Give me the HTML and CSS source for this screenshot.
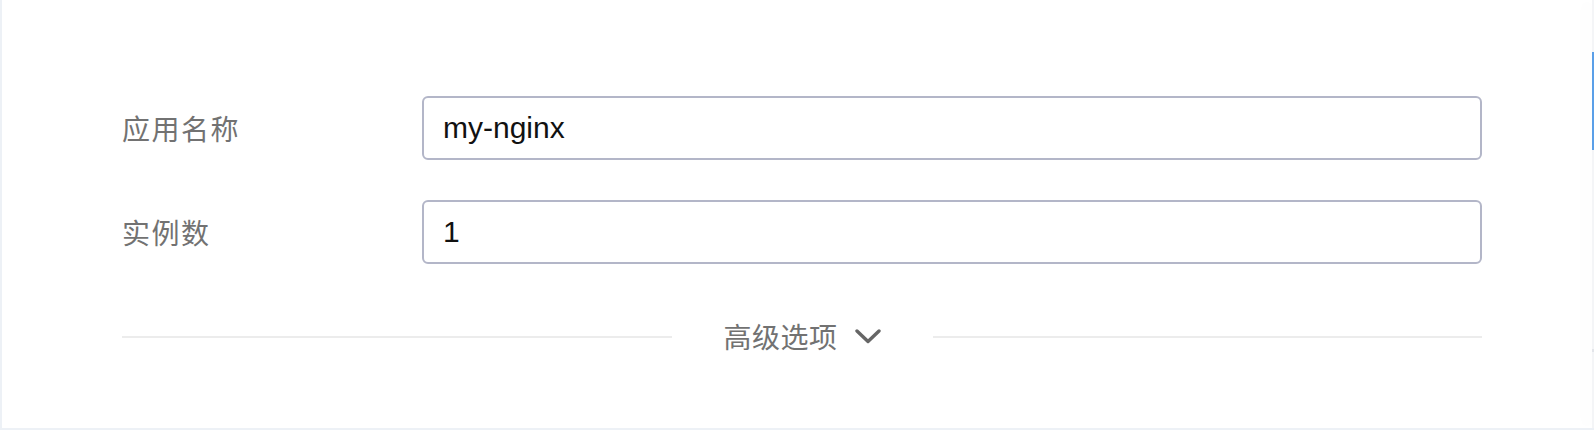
FILE: index.html
```html
<!DOCTYPE html>
<html lang="zh-CN">
<head>
<meta charset="utf-8">
<title>应用设置</title>
<link rel="stylesheet" href="styles.css">
</head>
<body>
<div class="page">
  <main class="panel">
    <form class="form">
      <div class="row">
        <label class="label">应用名称</label>
        <div class="field">my-nginx</div>
      </div>
      <div class="row">
        <label class="label">实例数</label>
        <div class="field">1</div>
      </div>
      <div class="divider">
        <span class="line"></span>
        <button type="button" class="toggle">
          <span>高级选项</span>
          <svg class="chev" width="26" height="15" viewBox="0 0 26 15"><path d="M2 2 L13 12.5 L24 2" fill="none" stroke="#666" stroke-width="3.4" stroke-linecap="round" stroke-linejoin="round"/></svg>
        </button>
        <span class="line"></span>
      </div>
    </form>
  </main>
  <aside class="side">
    <span class="side-active"></span>
    <span class="side-tick"></span>
  </aside>
</div>
</body>
</html>
```

FILE: styles.css
```css
* { box-sizing: border-box; }
html, body { margin: 0; padding: 0; }
body {
  width: 1594px;
  height: 430px;
  background: #edf1f6;
  font-family: "Noto Sans CJK SC", "Liberation Sans", sans-serif;
  overflow: hidden;
}
.page {
  display: flex;
  height: 430px;
  padding-left: 2px;
  padding-bottom: 2px;
}
.panel {
  flex: 1;
  background: #fff;
  padding: 96px 110px 0 120px;
}
.form {
  display: flex;
  flex-direction: column;
  gap: 40px;
}
.row {
  display: flex;
  align-items: center;
  height: 64px;
}
.label {
  width: 300px;
  flex: none;
  font-size: 28px;
  letter-spacing: 1.5px;
  color: #727272;
  line-height: 40px;
}
.field {
  flex: 1;
  height: 64px;
  border: 2px solid #b3b6c8;
  border-radius: 6px;
  padding: 0 19px;
  display: flex;
  align-items: center;
  font-family: "Liberation Sans", "Noto Sans CJK SC", sans-serif;
  font-size: 30px;
  color: #111;
}
.divider {
  display: flex;
  align-items: center;
  margin-top: 13px;
}
.line {
  flex: 1;
  height: 2px;
  background: #ececec;
}
.toggle {
  display: flex;
  align-items: center;
  gap: 17px;
  margin: 0 52px;
  padding: 0;
  border: 0;
  background: transparent;
  font-family: "Noto Sans CJK SC", sans-serif;
  font-size: 28px;
  letter-spacing: 0.5px;
  color: #727272;
  line-height: 40px;
  position: relative;
  top: -1px;
}
.chev { display: block; }
.side {
  width: 2px;
  flex: none;
  background: #f4f5f7;
  box-shadow: -6px 0 14px rgba(0, 0, 0, 0.05);
  display: flex;
  flex-direction: column;
}
.side-active {
  margin-top: 52px;
  height: 98px;
  background: #5a9fe8;
}
.side-tick {
  margin-top: 199px;
  height: 3px;
  background: #e3e5ea;
}
```
